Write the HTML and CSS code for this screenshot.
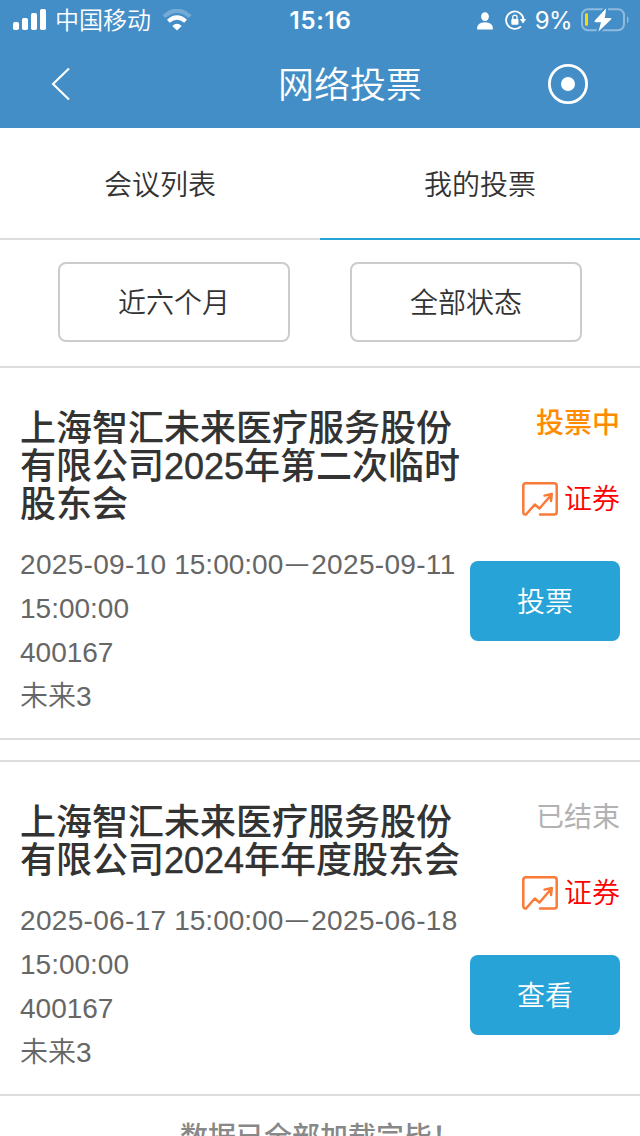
FILE: index.html
```html
<!DOCTYPE html>
<html lang="zh-CN">
<head>
<meta charset="utf-8">
<title>网络投票</title>
<link rel="stylesheet" href="styles.css">
</head>
<body>
<svg class="defs" width="0" height="0" aria-hidden="true">
  <symbol id="trend" viewBox="0 0 36 34">
    <path d="M4 32.5Q1.3 33 1.3 30V4Q1.3 1.3 4 1.3H32Q34.7 1.3 34.7 4V30Q34.7 32.6 32 32.6H18M4 32.5L12.8 22.5L17.5 26.5L29.5 12.5M22.5 13.6L29.8 12L29 19" fill="none" stroke="#fa7a38" stroke-width="2.5" stroke-linejoin="round" stroke-linecap="round"/>
  </symbol>
</svg>
<header class="header">
  <div class="statusbar">
    <div class="status-left">
      <svg class="signal" width="34" height="22" viewBox="0 0 34 22" fill="#fff"><rect x="0" y="13" width="6" height="8" rx="1.8"/><rect x="9" y="9" width="6" height="12" rx="1.8"/><rect x="18" y="4" width="6" height="17" rx="1.8"/><rect x="27" y="0" width="6" height="21" rx="1.8"/></svg>
      <span class="carrier">中国移动</span>
      <svg class="wifi" width="30" height="22" viewBox="0 0 30 22"><path d="M1.9 7.5Q15-4.2 28.1 7.5" fill="none" stroke="#fff" stroke-opacity=".25" stroke-width="4.3"/><path d="M6.4 12.3Q15 4.7 23.6 12.3" fill="none" stroke="#fff" stroke-width="4.2"/><path d="M10.3 16.9Q15 12.7 19.7 16.9L15 21.5Z" fill="#fff"/></svg>
    </div>
    <span class="clock">15:16</span>
    <div class="status-right">
      <svg class="person" width="16" height="18" viewBox="0 0 16 18" fill="#fff"><ellipse cx="8" cy="4.6" rx="3.9" ry="4.4"/><path d="M0 17Q0 10.3 8 10.3T16 17Q16 17.5 15 17.5H1Q0 17.5 0 17Z"/></svg>
      <svg class="lock" width="22" height="20" viewBox="0 0 22 20"><path d="M16 16.3A8.7 8.7 0 1 1 18.5 9.5" fill="none" stroke="#fff" stroke-width="1.8"/><path d="M14.8 9H21.2L18 13.5Z" fill="#fff"/><rect x="6.3" y="9" width="7.2" height="5.7" rx="1" fill="#fff"/><path d="M7.8 9.5V7.2Q7.8 5.2 9.9 5.2T12 7.2V9.5" fill="none" stroke="#fff" stroke-width="1.3"/></svg>
      <span class="percent">9%</span>
      <svg class="battery" width="48" height="24" viewBox="0 0 48 24"><rect x="1" y="1.3" width="42" height="21" rx="6" fill="none" stroke="#fff" stroke-opacity=".4" stroke-width="2"/><path d="M46 8.3Q47.7 9 47.7 12T46 15.3Z" fill="#fff" fill-opacity=".4"/><rect x="4" y="5.3" width="3" height="12.5" rx="1" fill="#ffd60a"/><path d="M25.2.3L13.6 12.8Q13.2 14.2 14.5 14.2H20L17.5 23.5L30 11.5Q31 10 29.5 10H23.8Z" fill="#fff" stroke="#448ec8" stroke-width="4" paint-order="stroke"/></svg>
    </div>
  </div>
  <div class="navbar">
    <svg class="back" width="20" height="34" viewBox="0 0 20 34"><path d="M18 1.5L2 17L18 32.5" fill="none" stroke="#fff" stroke-width="2.1"/></svg>
    <h1 class="nav-title">网络投票</h1>
    <svg class="close" width="40" height="40" viewBox="0 0 40 40"><circle cx="20" cy="20" r="18.6" fill="none" stroke="#fff" stroke-width="2.8"/><circle cx="20" cy="20" r="7" fill="#fff"/></svg>
  </div>
</header>
<nav class="tabs">
  <div class="tab">会议列表</div>
  <div class="tab active">我的投票</div>
</nav>
<div class="filters">
  <div class="filter">近六个月</div>
  <div class="filter">全部状态</div>
</div>
<main>
  <article class="card">
    <div class="info">
      <h2 class="title">上海智汇未来医疗服务股份<br>有限公司<span class="year">2025</span>年第二次临时<br>股东会</h2>
      <p class="meta"><span class="date">2025-09-10</span> 15:00:00<span class="dash">—</span><span class="date">2025-09-11</span><br>15:00:00</p>
      <p class="meta">400167</p>
      <p class="meta">未来3</p>
    </div>
    <div class="side">
      <span class="state voting">投票中</span>
      <span class="kind"><svg width="36" height="34"><use href="#trend"/></svg><span class="kind-name">证券</span></span>
      <div class="action">投票</div>
    </div>
  </article>
  <article class="card next">
    <div class="info">
      <h2 class="title">上海智汇未来医疗服务股份<br>有限公司<span class="year">2024</span>年年度股东会</h2>
      <p class="meta"><span class="date">2025-06-17</span> 15:00:00<span class="dash">—</span><span class="date">2025-06-18</span><br>15:00:00</p>
      <p class="meta">400167</p>
      <p class="meta">未来3</p>
    </div>
    <div class="side">
      <span class="state ended">已结束</span>
      <span class="kind"><svg width="36" height="34"><use href="#trend"/></svg><span class="kind-name">证券</span></span>
      <div class="action">查看</div>
    </div>
  </article>
</main>
<footer class="end">数据已全部加载完毕！</footer>
</body>
</html>
```
FILE: styles.css
```css
* { box-sizing: border-box; }
html { overflow: hidden; }
body {
  margin: 0;
  width: 640px;
  height: 1136px;
  overflow: hidden;
  background: #fff;
  color: #333;
  font: 350 28px/44px "Liberation Sans", "Noto Sans CJK SC DemiLight", "Noto Sans CJK SC", sans-serif;
}
h1, h2, p { margin: 0; }
svg { display: block; flex: none; }
.defs { position: absolute; }
.header { height: 128px; background: #448ec8; color: #fff; }
.statusbar {
  height: 40px;
  display: grid;
  grid-template-columns: 1fr auto 1fr;
  align-items: center;
  padding: 0 11px 0 13px;
  font-family: Inter, "Noto Sans CJK SC DemiLight", "Noto Sans CJK SC", sans-serif;
  line-height: 38px;
}
.status-left, .status-right { display: flex; align-items: center; height: 40px; }
.status-right { justify-content: flex-end; }
.signal { margin-right: 8px; }
.carrier { padding-top: 2px; font-size: 24px; }
.wifi { margin: -1px 0 0 11px; }
.clock { padding-top: 1px; font-size: 24px; font-weight: 600; letter-spacing: .7px; margin-left: -1px; }
.person { margin-top: 1px; }
.lock { margin: 0 0 0 12px; }
.percent { margin-left: 8px; padding-top: 2px; font-size: 24px; font-weight: 400; letter-spacing: -.6px; }
.battery { margin-left: 9px; }
.navbar {
  height: 88px;
  display: grid;
  grid-template-columns: 180px 1fr 120px;
  align-items: center;
}
.back { margin-left: 51px; }
.nav-title { padding-top: 3px; text-align: center; font-size: 36px; font-weight: 350; line-height: 85px; }
.close { margin-left: 28px; }
.tabs { display: flex; height: 112px; }
.tab {
  flex: 1;
  border-bottom: 2px solid #ddd;
  text-align: center;
  line-height: 115px;
}
.tab.active { border-color: #28a3d8; }
.filters {
  display: flex;
  justify-content: center;
  gap: 60px;
  height: 128px;
  padding-top: 22px;
  border-bottom: 2px solid #ddd;
}
.filter {
  width: 232px;
  height: 80px;
  border: 2px solid #ccc;
  border-radius: 8px;
  text-align: center;
  line-height: 80px;
}
.card {
  display: flex;
  justify-content: space-between;
  padding: 42px 20px 19px;
  border-bottom: 2px solid #ddd;
}
.card.next { margin-top: 20px; border-top: 2px solid #ddd; }
.info { width: 444px; white-space: nowrap; }
.title {
  margin-bottom: 19px;
  font-family: "Liberation Sans", "Noto Sans CJK SC", sans-serif;
  font-size: 36px;
  line-height: 38px;
  font-weight: 500;
}
.year { -webkit-text-stroke: .45px #333; }
.meta { color: #666; }
.date { letter-spacing: .32px; }
.dash { display: inline-block; transform: translateY(-2px) scaleX(.8); }
.side {
  width: 150px;
  display: flex;
  flex-direction: column;
  align-items: flex-end;
}
.state {
  margin-top: -8px;
  font-family: "Liberation Sans", "Noto Sans CJK SC", sans-serif;
  font-weight: 400;
}
.voting { color: #ff8c00; font-weight: 500; }
.ended { color: #b2b2b2; }
.kind { display: flex; align-items: center; gap: 6px; margin-top: 29px; color: #f00; }
.kind-name { padding-top: 3px; }
.action {
  width: 150px;
  height: 80px;
  margin-top: 39px;
  border-radius: 8px;
  background: #28a3d8;
  color: #fff;
  text-align: center;
  line-height: 83px;
}
.end {
  padding-top: 20px;
  text-align: center;
  color: #888;
  font-family: "Liberation Sans", "Noto Sans CJK SC", sans-serif;
  font-weight: 500;
}
```
